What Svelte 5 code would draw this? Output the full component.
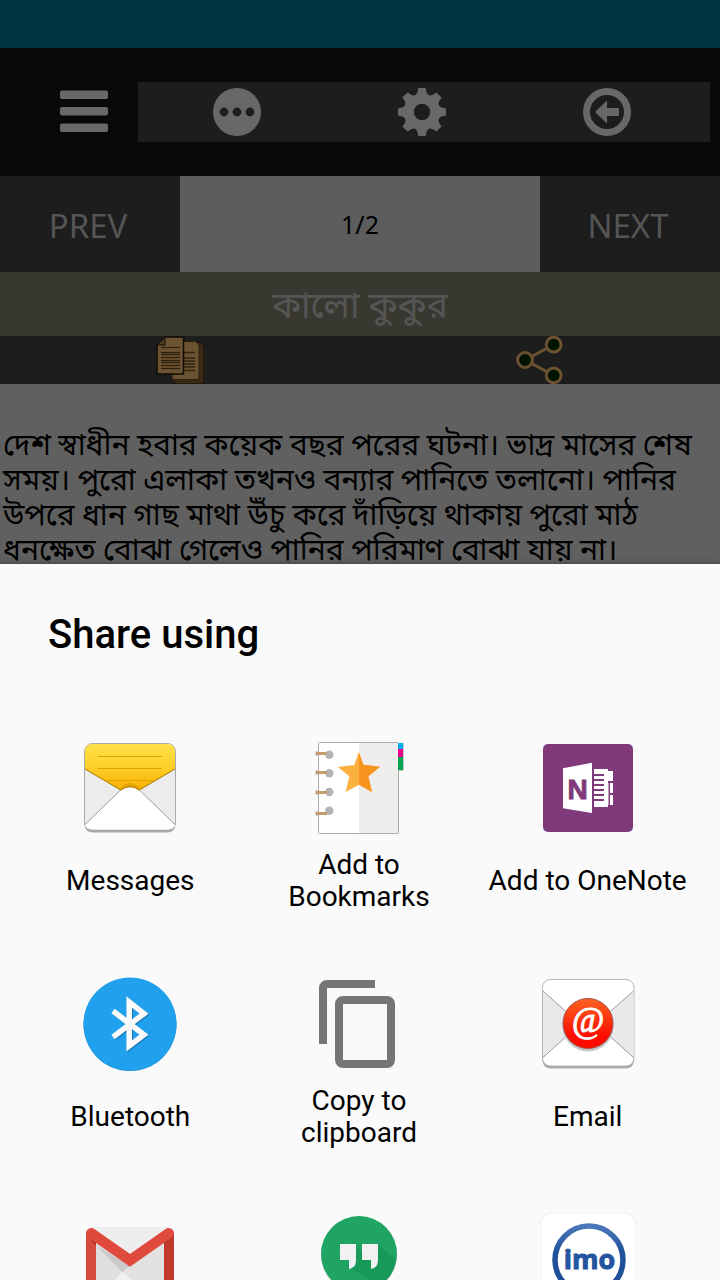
<script>
  const gearTeeth = [0, 45, 90, 135, 180, 225, 270, 315];
  const textLines = [11, 16, 18, 21, 24, 26, 29, 32];

  const apps = [
    { id: "messages", label: "Messages" },
    { id: "bookmarks", label: "Add to Bookmarks" },
    { id: "onenote", label: "Add to OneNote" },
    { id: "bluetooth", label: "Bluetooth" },
    { id: "clipboard", label: "Copy to clipboard" },
    { id: "email", label: "Email" },
    { id: "gmail", label: "Gmail" },
    { id: "hangouts", label: "Hangouts" },
    { id: "imo", label: "imo" },
  ];
</script>

<div class="screen">
  <div class="status-bar"></div>

  <header class="toolbar">
    <button class="menu" aria-label="Menu">
      <svg width="48" height="48" viewBox="0 0 48 48" fill="#686868">
        <rect y="2.5" width="48" height="8.5" rx="2" />
        <rect y="19" width="48" height="8.5" rx="2" />
        <rect y="35.5" width="48" height="8.5" rx="2" />
      </svg>
    </button>
    <nav class="tools">
      <button aria-label="More">
        <svg width="48" height="48" viewBox="0 0 48 48">
          <circle cx="24" cy="24" r="24" fill="#686868" />
          <g fill="#1d1d1d">
            <circle cx="11" cy="24" r="4.4" />
            <circle cx="24" cy="24" r="4.4" />
            <circle cx="37" cy="24" r="4.4" />
          </g>
        </svg>
      </button>
      <button aria-label="Settings">
        <svg width="48" height="48" viewBox="-24 -24 48 48" fill="#686868">
          {#each gearTeeth as angle}
            <path
              d="M-8-14Q-8-17-6-17.5Q-4.3-19-3.6-24H3.6Q4.3-19 6-17.5Q8-17 8-14Z"
              transform="rotate({angle})"
            />
          {/each}
          <circle r="12.5" fill="none" stroke="#686868" stroke-width="9" />
          <circle r="8" fill="#1d1d1d" />
        </svg>
      </button>
      <button aria-label="Back">
        <svg width="48" height="48" viewBox="0 0 48 48">
          <circle cx="24" cy="24" r="20.5" fill="none" stroke="#686868" stroke-width="7" />
          <path d="M12 24L24 12.500V20H36V28H24V35.500Z" fill="#686868" />
        </svg>
      </button>
    </nav>
  </header>

  <div class="pager">
    <button>PREV</button>
    <span class="page">1/2</span>
    <button>NEXT</button>
  </div>

  <h1>কালো কুকুর</h1>

  <div class="actions">
    <button aria-label="Copy">
      <svg width="48" height="48" viewBox="0 0 48 48">
        <path d="M19 6H44L48 10V48H20L16 44V6Z" fill="#3a2a14" stroke="#0c0a06" />
        <path d="M16 5.500H40L43 9V43.500H16Z" fill="#6b5230" stroke="#2b2010" />
        <path d="M28 16.500H39M28 22H39M28 25H39M28 28H39M28 31H39M28 34.500H39" stroke="#33250f" stroke-width="1.400" />
        <path d="M9 1H27.500V38H1V9Z" fill="#6b5230" stroke="#100c06" stroke-width="1.500" />
        <path d="M9 1V9H1Z" fill="#4c391f" stroke="#100c06" />
        {#each textLines as y}
          <path d="M5 {y}.5H24" stroke="#2b1f0d" stroke-width="1.200" />
        {/each}
      </svg>
    </button>
    <button aria-label="Share">
      <svg width="48" height="48" viewBox="0 0 48 48" stroke="#6b5230" stroke-width="3">
        <path d="M37.700 8.700L9 24L37.700 39.300" fill="none" />
        <g fill="#011401">
          <circle cx="9" cy="24" r="7.400" />
          <circle cx="37.700" cy="8.700" r="7.400" />
          <circle cx="37.700" cy="39.300" r="7.400" />
        </g>
      </svg>
    </button>
  </div>

  <article>
    <p>
      দেশ স্বাধীন হবার কয়েক বছর পরের ঘটনা। ভাদ্র মাসের শেষ সময়। পুরো এলাকা
      তখনও বন্যার পানিতে তলানো। পানির উপরে ধান গাছ মাথা উঁচু করে দাঁড়িয়ে থাকায়
      পুরো মাঠ ধনক্ষেত বোঝা গেলেও পানির পরিমাণ বোঝা যায় না।
    </p>
  </article>

  <section class="sheet">
    <h2>Share using</h2>
    <div class="apps">
      {#each apps as app (app.id)}
        <button class="app">
          <svg width="96" height="96" viewBox="0 0 96 96" aria-hidden="true">
            {#if app.id === "messages"}
              <defs>
                <linearGradient id="flap" x1="0" y1="0" x2="0" y2="1">
                  <stop offset="0" stop-color="#ffe04a" />
                  <stop offset="0.45" stop-color="#ffd22c" />
                  <stop offset="1" stop-color="#fbb000" />
                </linearGradient>
              </defs>
              <rect x="2.500" y="5" width="91" height="87.500" rx="8" fill="#a9a9a9" />
              <rect x="2.500" y="3.500" width="91" height="86.500" rx="8" fill="#ececec" stroke="#a9a9a9" />
              <path d="M3 85L38.700 50Q48 43.500 57.300 50L93 85Q92 89.500 85 89.500H11Q4 89.500 3 85Z" fill="#fff" />
              <path d="M3 84.500L38.700 50M57.300 50L93 84.500" stroke="#888" stroke-width="0.8" />
              <path d="M3 29V11.500Q3 4 10.500 4H85.500Q93 4 93 11.500V29L57.300 50Q48 43.500 38.700 50Z" fill="url(#flap)" />
              <path d="M39 47Q48 39 57 47L57.300 50Q48 43.500 38.700 50Z" fill="#e5a400" />
              <path d="M3 29L38.700 50Q48 43.500 57.300 50L93 29" fill="none" stroke="#a57700" />
              <path d="M16 16.500H80M16 28.500H80M25 40.500H71" stroke="#dca400" />
            {:else if app.id === "bookmarks"}
              <path d="M87 3H92.500V30.500H87Z" fill="#999" />
              <rect x="7.500" y="2.500" width="80" height="91" rx="1" fill="#fff" stroke="#aaa" />
              <path d="M48 3H87V93H48Z" fill="#efeeec" />
              <path d="M87 3H92V9H87Z" fill="#00aeef" />
              <path d="M87 9H92V17H87Z" fill="#ec008c" />
              <path d="M87 17H92V30H87Z" fill="#00a651" />
              <path d="M47.700 12L52.300 24.700L69 26.700L57.300 36.300L61 52L48 44.700L34.700 52L38.300 36.300L26.700 27L43.300 25Z" fill="#fbb040" />
              <path d="M48 12.500L52.300 24.700L69 26.700L57.300 36.300L61 52L48 44.700Z" fill="#f7941e" />
              <g fill="#b3b3b3">
                <circle cx="18.300" cy="14.700" r="4.200" />
                <circle cx="18.300" cy="33.300" r="4.200" />
                <circle cx="18.300" cy="52" r="4.200" />
                <circle cx="18.300" cy="70.700" r="4.200" />
              </g>
              <path d="M4.500 13.500H8M4.500 32.500H8M4.500 52.500H8M4.500 73.500H8" stroke="#aaa" stroke-width="4" />
              <path d="M5 13.500H16M5 32.500H16M5 52.500H16M5 73.500H16" stroke="#c69c6d" stroke-width="3" />
            {:else if app.id === "onenote"}
              <rect x="3" y="4" width="90" height="88" rx="5" fill="#80397b" />
              <path d="M23 28.300L52 22.700V73L23 68.300Z" fill="#fff" />
              <path d="M54 29H68V31H73V41H68V67H54Z" fill="#fff" />
              <path d="M70 43H73V53H70ZM70 55H73V65H70Z" fill="#fff" />
              <path d="M68 43V65" stroke="#fff" />
              <path d="M54 35H64M54 40H64M54 45H64M54 50H64M54 55H64M54 60H64" stroke="#80397b" stroke-width="2" />
              <text x="37.500" y="58.500" class="letter" font-size="28" fill="#80397b">N</text>
            {:else if app.id === "bluetooth"}
              <circle cx="48" cy="48.500" r="46.500" fill="#1a86c8" />
              <circle cx="48" cy="48" r="46.500" fill="#21a0ee" />
              <g fill="none" stroke-width="5.500" stroke-miterlimit="10">
                <path d="M32 36L63 59.700L48.200 71V27L63 38.700L32 62" stroke="#1a78b4" />
                <path d="M31 35L62 58.700L47.200 70V26L62 37.700L31 61" stroke="#fafafa" />
              </g>
            {:else if app.id === "clipboard"}
              <g fill="none" stroke="#757575" stroke-width="8">
                <path d="M12 68V12A4 4 0 0 1 16 8H64" />
                <rect x="28" y="24" width="52" height="64" rx="4" />
              </g>
            {:else if app.id === "email"}
              <defs>
                <linearGradient id="seal" x1="0" y1="0" x2="0" y2="1">
                  <stop offset="0" stop-color="#ff6422" />
                  <stop offset="0.75" stop-color="#fc0d00" />
                </linearGradient>
              </defs>
              <rect x="2.500" y="5" width="91.500" height="87.500" rx="8" fill="#a9a9a9" />
              <rect x="2.500" y="3.500" width="91.500" height="86.500" rx="8" fill="#fff" stroke="#b5b5b5" />
              <path d="M3 15L40 48L3 81.500Z" fill="#e9e9e9" />
              <path d="M93.500 15L56 48L93.500 81.500Z" fill="#e9e9e9" />
              <path d="M3 15L40 48L3 81.500M93.500 15L56 48L93.500 81.500" fill="none" stroke="#888" stroke-width="0.8" />
              <circle cx="48" cy="50" r="25.500" fill="#c8c8c8" />
              <circle cx="48" cy="47.500" r="25" fill="url(#seal)" stroke="#a05048" />
              <text x="48" y="56" class="at" font-size="35" fill="#fff">@</text>
            {:else if app.id === "gmail"}
              <rect x="4" y="15" width="88" height="66" rx="5" fill="#eee" />
              <path d="M14 30L48 52L82 30V81H14Z" fill="#e2e2e2" />
              <path d="M14 33L40 60L28 72L14 81Z" fill="#dfdfdf" />
              <path d="M14 33L40 60L48 54Z" fill="#c9c9c9" />
              <path d="M40 60L48 66L56 74V81H22Z" fill="#f0f0f0" />
              <path d="M4 21H14V81H9Q4 81 4 76Z" fill="#d54b3e" />
              <path d="M82 21H92V76Q92 81 87 81H82Z" fill="#c0392b" />
              <path d="M4 22L14 34V28ZM92 22L82 34V28Z" fill="#a93226" />
              <path d="M9.300 21.300L48 48.300L86.700 21.300" fill="none" stroke="#df4a3d" stroke-width="10.500" stroke-linecap="round" />
            {:else if app.id === "hangouts"}
              <circle cx="48" cy="43" r="38" fill="#b9c9c0" />
              <circle cx="48" cy="42" r="38" fill="#1fa463" />
              <path d="M67 32L84.500 48Q82 64 69 74L33 52L45 56V33L52 42Z" fill="#17995a" />
              <path d="M29 32H45V48Q45 56 38 57V48H29ZM51 32H67V48Q67 56 60 57V48H51Z" fill="#f1f1f1" />
            {:else if app.id === "imo"}
              <defs>
                <linearGradient id="ring" x1="0" y1="0" x2="0" y2="1">
                  <stop offset="0" stop-color="#4a78bb" />
                  <stop offset="0.4" stop-color="#1f4f98" />
                </linearGradient>
              </defs>
              <rect x="1" y="1" width="94" height="94" rx="10" fill="#fff" stroke="#f2f2f2" />
              <circle cx="49" cy="48" r="34" fill="none" stroke="url(#ring)" stroke-width="5.500" />
              <text x="49.500" y="57" class="imo" font-size="27" fill="#2555a0">imo</text>
            {/if}
          </svg>
          <span>{app.label}</span>
        </button>
      {/each}
    </div>
  </section>
</div>

<style>
  :global(body) {
    margin: 0;
    background: #fafafa;
  }

  .screen {
    display: flex;
    flex-direction: column;
    height: 100vh;
    overflow: hidden;
    font-family: Roboto, "Noto Sans", "Noto Sans Bengali", sans-serif;
  }
  .screen > * {
    flex-shrink: 0;
  }

  button {
    padding: 0;
    border: none;
    background: none;
    font: inherit;
    cursor: pointer;
  }
  svg {
    display: block;
  }

  .status-bar {
    height: 48px;
    background: #003540;
  }

  .toolbar {
    display: flex;
    align-items: center;
    gap: 30px;
    height: 128px;
    padding: 0 10px 0 60px;
    background: #090909;
  }
  .tools {
    flex: 1;
    display: flex;
    align-items: center;
    height: 60px;
    padding: 0 11px 0 6px;
    background: #1d1d1d;
  }
  .tools button {
    flex: 1;
    display: flex;
    justify-content: center;
  }

  .pager {
    display: grid;
    grid-template-columns: 1fr 2fr 1fr;
    height: 96px;
    font-family: "Noto Sans", sans-serif;
  }
  .pager button {
    padding: 2px 4px 0 0;
    background: #1d1d1d;
    color: #555;
    font-size: 33px;
  }
  .page {
    display: flex;
    align-items: center;
    justify-content: center;
    background: #5d5d5d;
    color: #000;
    font-size: 25px;
  }

  h1 {
    margin: 0;
    height: 62px;
    padding-top: 2px;
    background: #383830;
    color: #555;
    font-size: 36px;
    font-weight: 400;
    line-height: 64px;
    text-align: center;
  }

  .actions {
    display: grid;
    grid-template-columns: 1fr 1fr;
    height: 48px;
    background: #1d1d1d;
  }
  .actions button {
    display: flex;
    justify-content: center;
  }

  article {
    height: 180px;
    background: #606060;
  }
  article p {
    margin: 0;
    padding: 43px 3px 0;
    color: #000;
    font-size: 30px;
    line-height: 35px;
  }

  .sheet {
    position: relative;
    flex: 1;
    min-height: 0;
    overflow-y: auto;
    scrollbar-width: none;
    background: #fafafa;
    color: #000;
    box-shadow: 0 0 6px rgba(0, 0, 0, 0.4);
  }
  h2 {
    margin: 0;
    padding: 47px 48px 81px;
    font-size: 40px;
    font-weight: 500;
    line-height: 48px;
  }
  .apps {
    display: grid;
    grid-template-columns: repeat(3, 1fr);
    row-gap: 63px;
    padding: 0 18px 24px 16px;
  }
  .app {
    display: flex;
    flex-direction: column;
    align-items: center;
    gap: 13px;
    padding: 0 12px;
    color: #000;
    font-size: 28px;
    line-height: 32px;
  }
  .app span {
    display: flex;
    align-items: center;
    min-height: 64px;
  }

  .letter,
  .at,
  .imo {
    text-anchor: middle;
    font-family: "Liberation Sans", sans-serif;
  }
  .letter {
    font-weight: 700;
    stroke: #80397b;
    stroke-width: 1;
  }
  .at {
    font-family: "Liberation Serif", serif;
    stroke: #fff;
    stroke-width: 1;
  }
  .imo {
    font-family: "Open Sans", sans-serif;
    font-weight: 700;
    stroke: #2555a0;
    stroke-width: 1;
  }
</style>
